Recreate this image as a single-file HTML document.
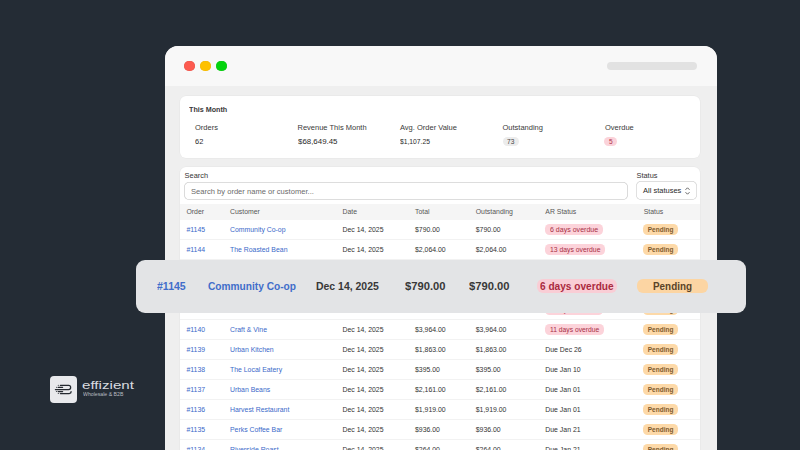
<!DOCTYPE html>
<html><head><meta charset="utf-8"><style>
html,body{margin:0;padding:0;width:800px;height:450px;overflow:hidden;background:#242c35;}
body{position:relative;font-family:"Liberation Sans",sans-serif;}
.t{position:absolute;line-height:1;white-space:nowrap;}
.r{position:absolute;}
</style></head><body>
<div class="r" style="left:164.70px;top:45.50px;width:552.30px;height:424.50px;background:#efefef;border-radius:13px;"></div>
<div class="r" style="left:164.70px;top:45.50px;width:552.30px;height:40.90px;background:#f8f8f8;border-radius:13px 13px 0 0px;"></div>
<div class="r" style="left:184.35px;top:60.55px;width:10.70px;height:10.70px;background:#fd5b50;border-radius:6px;box-shadow:inset 0 0 0 0.5px #e8564c;"></div>
<div class="r" style="left:200.15px;top:60.55px;width:10.70px;height:10.70px;background:#fec100;border-radius:6px;box-shadow:inset 0 0 0 0.5px #f0b80a;"></div>
<div class="r" style="left:215.90px;top:60.55px;width:10.70px;height:10.70px;background:#04d40e;border-radius:6px;box-shadow:inset 0 0 0 0.5px #10c81a;"></div>
<div class="r" style="left:607.30px;top:61.60px;width:89.90px;height:8.80px;background:#e2e2e2;border-radius:5px;"></div>
<div class="r" style="left:180.00px;top:95.50px;width:520.00px;height:62.50px;background:#ffffff;border-radius:6px;box-shadow:0 0 0 0.5px #e6e6e6;"></div>
<div class="t" style="left:188.80px;top:106.00px;font-size:7.4px;color:#3a3a3a;font-weight:700;transform:scaleX(0.9708);transform-origin:0 0;">This Month</div>
<div class="t" style="left:195.00px;top:124.00px;font-size:7.5px;color:#3a3a3a;font-weight:400;">Orders</div>
<div class="t" style="left:195.00px;top:138.00px;font-size:7.3px;color:#2a2a2a;font-weight:400;transform:scaleX(1.0223);transform-origin:0 0;">62</div>
<div class="t" style="left:297.50px;top:124.00px;font-size:7.5px;color:#3a3a3a;font-weight:400;">Revenue This Month</div>
<div class="t" style="left:297.50px;top:138.00px;font-size:7.3px;color:#2a2a2a;font-weight:400;transform:scaleX(1.0812);transform-origin:0 0;">$68,649.45</div>
<div class="t" style="left:400.00px;top:124.00px;font-size:7.5px;color:#3a3a3a;font-weight:400;">Avg. Order Value</div>
<div class="t" style="left:400.00px;top:138.00px;font-size:7.3px;color:#2a2a2a;font-weight:400;transform:scaleX(0.9239);transform-origin:0 0;">$1,107.25</div>
<div class="t" style="left:502.50px;top:124.00px;font-size:7.5px;color:#3a3a3a;font-weight:400;">Outstanding</div>
<div class="r" style="left:502.90px;top:136.90px;width:16.10px;height:9.10px;background:#ececec;border-radius:4.5px;"></div>
<div class="t" style="left:507.00px;top:139.00px;font-size:6.6px;color:#444;font-weight:400;">73</div>
<div class="t" style="left:605.00px;top:124.00px;font-size:7.5px;color:#3a3a3a;font-weight:400;">Overdue</div>
<div class="r" style="left:604.40px;top:136.90px;width:13.10px;height:9.10px;background:#fbd3da;border-radius:4.5px;"></div>
<div class="t" style="left:609.00px;top:139.00px;font-size:6.6px;color:#b0314a;font-weight:400;">5</div>
<div class="r" style="left:180.00px;top:167.00px;width:520.00px;height:313.00px;background:#ffffff;border-radius:6px;box-shadow:0 0 0 0.5px #e6e6e6;"></div>
<div class="t" style="left:184.60px;top:172.00px;font-size:7.4px;color:#333;font-weight:400;">Search</div>
<div class="r" style="left:184.00px;top:182.40px;width:443.60px;height:17.20px;background:#ffffff;border-radius:5px;box-shadow:inset 0 0 0 0.8px #d2d2d2;"></div>
<div class="t" style="left:191.00px;top:188.00px;font-size:7.4px;color:#6a6a6a;font-weight:400;transform:scaleX(1.0242);transform-origin:0 0;">Search by order name or customer...</div>
<div class="t" style="left:636.50px;top:172.00px;font-size:7.4px;color:#333;font-weight:400;">Status</div>
<div class="r" style="left:636.00px;top:181.40px;width:60.70px;height:18.50px;background:#ffffff;border-radius:5px;box-shadow:inset 0 0 0 0.7px #d4d4d4;"></div>
<div class="t" style="left:643.00px;top:187.00px;font-size:7.5px;color:#2a2a2a;font-weight:400;">All statuses</div>
<svg class="r" style="left:684px;top:186px;width:7px;height:10px" viewBox="0 0 7 10"><path d="M1.5 3.8 L3.5 1.8 L5.5 3.8 M1.5 6.2 L3.5 8.2 L5.5 6.2" fill="none" stroke="#555" stroke-width="0.9"/></svg>
<div class="r" style="left:180.00px;top:204.00px;width:520.00px;height:15.60px;background:#f5f5f5;border-radius:0px;"></div>
<div class="t" style="left:186.40px;top:209.00px;font-size:6.9px;color:#555555;font-weight:400;">Order</div>
<div class="t" style="left:230.00px;top:209.00px;font-size:6.9px;color:#555555;font-weight:400;">Customer</div>
<div class="t" style="left:342.50px;top:209.00px;font-size:6.9px;color:#555555;font-weight:400;">Date</div>
<div class="t" style="left:415.00px;top:209.00px;font-size:6.9px;color:#555555;font-weight:400;">Total</div>
<div class="t" style="left:475.75px;top:209.00px;font-size:6.9px;color:#555555;font-weight:400;">Outstanding</div>
<div class="t" style="left:545.30px;top:209.00px;font-size:6.9px;color:#555555;font-weight:400;">AR Status</div>
<div class="t" style="left:643.70px;top:209.00px;font-size:6.9px;color:#555555;font-weight:400;">Status</div>
<div class="t" style="left:186.40px;top:227.00px;font-size:6.9px;color:#3a69c9;font-weight:400;">#1145</div>
<div class="t" style="left:230.00px;top:227.00px;font-size:6.9px;color:#3a69c9;font-weight:400;">Community Co-op</div>
<div class="t" style="left:342.50px;top:227.00px;font-size:6.9px;color:#333333;font-weight:400;">Dec 14, 2025</div>
<div class="t" style="left:415.00px;top:227.00px;font-size:6.9px;color:#333333;font-weight:400;">$790.00</div>
<div class="t" style="left:475.75px;top:227.00px;font-size:6.9px;color:#333333;font-weight:400;">$790.00</div>
<div class="r" style="left:545.30px;top:224.25px;width:57.40px;height:10.65px;background:#fcd3da;border-radius:4.6px;"></div>
<div class="t" style="left:549.80px;top:227.00px;font-size:6.9px;color:#a82f45;font-weight:400;transform:scaleX(1.0217);transform-origin:0 0;">6 days overdue</div>
<div class="r" style="left:643.00px;top:224.00px;width:34.70px;height:10.90px;background:#fdd9a8;border-radius:4.6px;"></div>
<div class="t" style="left:647.75px;top:227.00px;font-size:6.5px;color:#7d5a2e;font-weight:700;">Pending</div>
<div class="r" style="left:180.00px;top:239.40px;width:520.00px;height:0.70px;background:#f2f2f2;border-radius:0px;"></div>
<div class="t" style="left:186.40px;top:247.00px;font-size:6.9px;color:#3a69c9;font-weight:400;">#1144</div>
<div class="t" style="left:230.00px;top:247.00px;font-size:6.9px;color:#3a69c9;font-weight:400;">The Roasted Bean</div>
<div class="t" style="left:342.50px;top:247.00px;font-size:6.9px;color:#333333;font-weight:400;">Dec 14, 2025</div>
<div class="t" style="left:415.00px;top:247.00px;font-size:6.9px;color:#333333;font-weight:400;">$2,064.00</div>
<div class="t" style="left:475.75px;top:247.00px;font-size:6.9px;color:#333333;font-weight:400;">$2,064.00</div>
<div class="r" style="left:545.30px;top:244.25px;width:59.70px;height:10.65px;background:#fcd3da;border-radius:4.6px;"></div>
<div class="t" style="left:549.80px;top:247.00px;font-size:6.9px;color:#a82f45;font-weight:400;transform:scaleX(0.9899);transform-origin:0 0;">13 days overdue</div>
<div class="r" style="left:643.00px;top:244.00px;width:34.70px;height:10.90px;background:#fdd9a8;border-radius:4.6px;"></div>
<div class="t" style="left:647.75px;top:247.00px;font-size:6.5px;color:#7d5a2e;font-weight:700;">Pending</div>
<div class="r" style="left:180.00px;top:259.40px;width:520.00px;height:0.70px;background:#f2f2f2;border-radius:0px;"></div>
<div class="t" style="left:186.40px;top:267.00px;font-size:6.9px;color:#3a69c9;font-weight:400;">#1143</div>
<div class="t" style="left:230.00px;top:267.00px;font-size:6.9px;color:#3a69c9;font-weight:400;">Bean &amp; Leaf</div>
<div class="t" style="left:342.50px;top:267.00px;font-size:6.9px;color:#333333;font-weight:400;">Dec 14, 2025</div>
<div class="t" style="left:415.00px;top:267.00px;font-size:6.9px;color:#333333;font-weight:400;">$1,245.00</div>
<div class="t" style="left:475.75px;top:267.00px;font-size:6.9px;color:#333333;font-weight:400;">$1,245.00</div>
<div class="r" style="left:545.30px;top:264.25px;width:57.40px;height:10.65px;background:#fcd3da;border-radius:4.6px;"></div>
<div class="t" style="left:549.80px;top:267.00px;font-size:6.9px;color:#a82f45;font-weight:400;transform:scaleX(1.0217);transform-origin:0 0;">9 days overdue</div>
<div class="r" style="left:643.00px;top:264.00px;width:34.70px;height:10.90px;background:#fdd9a8;border-radius:4.6px;"></div>
<div class="t" style="left:647.75px;top:267.00px;font-size:6.5px;color:#7d5a2e;font-weight:700;">Pending</div>
<div class="r" style="left:180.00px;top:279.40px;width:520.00px;height:0.70px;background:#f2f2f2;border-radius:0px;"></div>
<div class="t" style="left:186.40px;top:287.00px;font-size:6.9px;color:#3a69c9;font-weight:400;">#1142</div>
<div class="t" style="left:230.00px;top:287.00px;font-size:6.9px;color:#3a69c9;font-weight:400;">Daily Grind</div>
<div class="t" style="left:342.50px;top:287.00px;font-size:6.9px;color:#333333;font-weight:400;">Dec 14, 2025</div>
<div class="t" style="left:415.00px;top:287.00px;font-size:6.9px;color:#333333;font-weight:400;">$842.00</div>
<div class="t" style="left:475.75px;top:287.00px;font-size:6.9px;color:#333333;font-weight:400;">$842.00</div>
<div class="r" style="left:545.30px;top:284.25px;width:57.40px;height:10.65px;background:#fcd3da;border-radius:4.6px;"></div>
<div class="t" style="left:549.80px;top:287.00px;font-size:6.9px;color:#a82f45;font-weight:400;transform:scaleX(1.0217);transform-origin:0 0;">8 days overdue</div>
<div class="r" style="left:643.00px;top:284.00px;width:34.70px;height:10.90px;background:#fdd9a8;border-radius:4.6px;"></div>
<div class="t" style="left:647.75px;top:287.00px;font-size:6.5px;color:#7d5a2e;font-weight:700;">Pending</div>
<div class="r" style="left:180.00px;top:299.40px;width:520.00px;height:0.70px;background:#f2f2f2;border-radius:0px;"></div>
<div class="t" style="left:186.40px;top:307.00px;font-size:6.9px;color:#3a69c9;font-weight:400;">#1141</div>
<div class="t" style="left:230.00px;top:307.00px;font-size:6.9px;color:#3a69c9;font-weight:400;">Green Table</div>
<div class="t" style="left:342.50px;top:307.00px;font-size:6.9px;color:#333333;font-weight:400;">Dec 14, 2025</div>
<div class="t" style="left:415.00px;top:307.00px;font-size:6.9px;color:#333333;font-weight:400;">$1,530.00</div>
<div class="t" style="left:475.75px;top:307.00px;font-size:6.9px;color:#333333;font-weight:400;">$1,530.00</div>
<div class="r" style="left:545.30px;top:304.25px;width:57.40px;height:10.65px;background:#fcd3da;border-radius:4.6px;"></div>
<div class="t" style="left:549.80px;top:307.00px;font-size:6.9px;color:#a82f45;font-weight:400;transform:scaleX(1.0217);transform-origin:0 0;">7 days overdue</div>
<div class="r" style="left:643.00px;top:304.00px;width:34.70px;height:10.90px;background:#fdd9a8;border-radius:4.6px;"></div>
<div class="t" style="left:647.75px;top:307.00px;font-size:6.5px;color:#7d5a2e;font-weight:700;">Pending</div>
<div class="r" style="left:180.00px;top:319.40px;width:520.00px;height:0.70px;background:#f2f2f2;border-radius:0px;"></div>
<div class="t" style="left:186.40px;top:327.00px;font-size:6.9px;color:#3a69c9;font-weight:400;">#1140</div>
<div class="t" style="left:230.00px;top:327.00px;font-size:6.9px;color:#3a69c9;font-weight:400;">Craft &amp; Vine</div>
<div class="t" style="left:342.50px;top:327.00px;font-size:6.9px;color:#333333;font-weight:400;">Dec 14, 2025</div>
<div class="t" style="left:415.00px;top:327.00px;font-size:6.9px;color:#333333;font-weight:400;">$3,964.00</div>
<div class="t" style="left:475.75px;top:327.00px;font-size:6.9px;color:#333333;font-weight:400;">$3,964.00</div>
<div class="r" style="left:545.30px;top:324.25px;width:58.50px;height:10.65px;background:#fcd3da;border-radius:4.6px;"></div>
<div class="t" style="left:549.80px;top:327.00px;font-size:6.9px;color:#a82f45;font-weight:400;transform:scaleX(0.9762);transform-origin:0 0;">11 days overdue</div>
<div class="r" style="left:643.00px;top:324.00px;width:34.70px;height:10.90px;background:#fdd9a8;border-radius:4.6px;"></div>
<div class="t" style="left:647.75px;top:327.00px;font-size:6.5px;color:#7d5a2e;font-weight:700;">Pending</div>
<div class="r" style="left:180.00px;top:339.40px;width:520.00px;height:0.70px;background:#f2f2f2;border-radius:0px;"></div>
<div class="t" style="left:186.40px;top:347.00px;font-size:6.9px;color:#3a69c9;font-weight:400;">#1139</div>
<div class="t" style="left:230.00px;top:347.00px;font-size:6.9px;color:#3a69c9;font-weight:400;">Urban Kitchen</div>
<div class="t" style="left:342.50px;top:347.00px;font-size:6.9px;color:#333333;font-weight:400;">Dec 14, 2025</div>
<div class="t" style="left:415.00px;top:347.00px;font-size:6.9px;color:#333333;font-weight:400;">$1,863.00</div>
<div class="t" style="left:475.75px;top:347.00px;font-size:6.9px;color:#333333;font-weight:400;">$1,863.00</div>
<div class="t" style="left:545.30px;top:347.00px;font-size:6.9px;color:#333333;font-weight:400;">Due Dec 26</div>
<div class="r" style="left:643.00px;top:344.00px;width:34.70px;height:10.90px;background:#fdd9a8;border-radius:4.6px;"></div>
<div class="t" style="left:647.75px;top:347.00px;font-size:6.5px;color:#7d5a2e;font-weight:700;">Pending</div>
<div class="r" style="left:180.00px;top:359.40px;width:520.00px;height:0.70px;background:#f2f2f2;border-radius:0px;"></div>
<div class="t" style="left:186.40px;top:367.00px;font-size:6.9px;color:#3a69c9;font-weight:400;">#1138</div>
<div class="t" style="left:230.00px;top:367.00px;font-size:6.9px;color:#3a69c9;font-weight:400;">The Local Eatery</div>
<div class="t" style="left:342.50px;top:367.00px;font-size:6.9px;color:#333333;font-weight:400;">Dec 14, 2025</div>
<div class="t" style="left:415.00px;top:367.00px;font-size:6.9px;color:#333333;font-weight:400;">$395.00</div>
<div class="t" style="left:475.75px;top:367.00px;font-size:6.9px;color:#333333;font-weight:400;">$395.00</div>
<div class="t" style="left:545.30px;top:367.00px;font-size:6.9px;color:#333333;font-weight:400;">Due Jan 10</div>
<div class="r" style="left:643.00px;top:364.00px;width:34.70px;height:10.90px;background:#fdd9a8;border-radius:4.6px;"></div>
<div class="t" style="left:647.75px;top:367.00px;font-size:6.5px;color:#7d5a2e;font-weight:700;">Pending</div>
<div class="r" style="left:180.00px;top:379.40px;width:520.00px;height:0.70px;background:#f2f2f2;border-radius:0px;"></div>
<div class="t" style="left:186.40px;top:387.00px;font-size:6.9px;color:#3a69c9;font-weight:400;">#1137</div>
<div class="t" style="left:230.00px;top:387.00px;font-size:6.9px;color:#3a69c9;font-weight:400;">Urban Beans</div>
<div class="t" style="left:342.50px;top:387.00px;font-size:6.9px;color:#333333;font-weight:400;">Dec 14, 2025</div>
<div class="t" style="left:415.00px;top:387.00px;font-size:6.9px;color:#333333;font-weight:400;">$2,161.00</div>
<div class="t" style="left:475.75px;top:387.00px;font-size:6.9px;color:#333333;font-weight:400;">$2,161.00</div>
<div class="t" style="left:545.30px;top:387.00px;font-size:6.9px;color:#333333;font-weight:400;">Due Jan 01</div>
<div class="r" style="left:643.00px;top:384.00px;width:34.70px;height:10.90px;background:#fdd9a8;border-radius:4.6px;"></div>
<div class="t" style="left:647.75px;top:387.00px;font-size:6.5px;color:#7d5a2e;font-weight:700;">Pending</div>
<div class="r" style="left:180.00px;top:399.40px;width:520.00px;height:0.70px;background:#f2f2f2;border-radius:0px;"></div>
<div class="t" style="left:186.40px;top:407.00px;font-size:6.9px;color:#3a69c9;font-weight:400;">#1136</div>
<div class="t" style="left:230.00px;top:407.00px;font-size:6.9px;color:#3a69c9;font-weight:400;">Harvest Restaurant</div>
<div class="t" style="left:342.50px;top:407.00px;font-size:6.9px;color:#333333;font-weight:400;">Dec 14, 2025</div>
<div class="t" style="left:415.00px;top:407.00px;font-size:6.9px;color:#333333;font-weight:400;">$1,919.00</div>
<div class="t" style="left:475.75px;top:407.00px;font-size:6.9px;color:#333333;font-weight:400;">$1,919.00</div>
<div class="t" style="left:545.30px;top:407.00px;font-size:6.9px;color:#333333;font-weight:400;">Due Jan 01</div>
<div class="r" style="left:643.00px;top:404.00px;width:34.70px;height:10.90px;background:#fdd9a8;border-radius:4.6px;"></div>
<div class="t" style="left:647.75px;top:407.00px;font-size:6.5px;color:#7d5a2e;font-weight:700;">Pending</div>
<div class="r" style="left:180.00px;top:419.40px;width:520.00px;height:0.70px;background:#f2f2f2;border-radius:0px;"></div>
<div class="t" style="left:186.40px;top:427.00px;font-size:6.9px;color:#3a69c9;font-weight:400;">#1135</div>
<div class="t" style="left:230.00px;top:427.00px;font-size:6.9px;color:#3a69c9;font-weight:400;">Perks Coffee Bar</div>
<div class="t" style="left:342.50px;top:427.00px;font-size:6.9px;color:#333333;font-weight:400;">Dec 14, 2025</div>
<div class="t" style="left:415.00px;top:427.00px;font-size:6.9px;color:#333333;font-weight:400;">$936.00</div>
<div class="t" style="left:475.75px;top:427.00px;font-size:6.9px;color:#333333;font-weight:400;">$936.00</div>
<div class="t" style="left:545.30px;top:427.00px;font-size:6.9px;color:#333333;font-weight:400;">Due Jan 21</div>
<div class="r" style="left:643.00px;top:424.00px;width:34.70px;height:10.90px;background:#fdd9a8;border-radius:4.6px;"></div>
<div class="t" style="left:647.75px;top:427.00px;font-size:6.5px;color:#7d5a2e;font-weight:700;">Pending</div>
<div class="r" style="left:180.00px;top:439.40px;width:520.00px;height:0.70px;background:#f2f2f2;border-radius:0px;"></div>
<div class="t" style="left:186.40px;top:447.00px;font-size:6.9px;color:#3a69c9;font-weight:400;">#1134</div>
<div class="t" style="left:230.00px;top:447.00px;font-size:6.9px;color:#3a69c9;font-weight:400;">Riverside Roast</div>
<div class="t" style="left:342.50px;top:447.00px;font-size:6.9px;color:#333333;font-weight:400;">Dec 14, 2025</div>
<div class="t" style="left:415.00px;top:447.00px;font-size:6.9px;color:#333333;font-weight:400;">$264.00</div>
<div class="t" style="left:475.75px;top:447.00px;font-size:6.9px;color:#333333;font-weight:400;">$264.00</div>
<div class="t" style="left:545.30px;top:447.00px;font-size:6.9px;color:#333333;font-weight:400;">Due Jan 21</div>
<div class="r" style="left:643.00px;top:444.00px;width:34.70px;height:10.90px;background:#fdd9a8;border-radius:4.6px;"></div>
<div class="t" style="left:647.75px;top:447.00px;font-size:6.5px;color:#7d5a2e;font-weight:700;">Pending</div>
<div class="r" style="left:135.50px;top:259.70px;width:610.30px;height:53.70px;background:#e3e4e6;border-radius:9px;"></div>
<div class="t" style="left:156.80px;top:281.00px;font-size:11px;color:#416dca;font-weight:700;transform:scaleX(0.9574);transform-origin:0 0;">#1145</div>
<div class="t" style="left:207.80px;top:281.00px;font-size:11px;color:#416dca;font-weight:700;transform:scaleX(0.9232);transform-origin:0 0;">Community Co-op</div>
<div class="t" style="left:315.50px;top:281.00px;font-size:11px;color:#383838;font-weight:700;transform:scaleX(0.9501);transform-origin:0 0;">Dec 14, 2025</div>
<div class="t" style="left:405.00px;top:281.00px;font-size:11px;color:#383838;font-weight:700;transform:scaleX(1.0187);transform-origin:0 0;">$790.00</div>
<div class="t" style="left:468.75px;top:281.00px;font-size:11px;color:#383838;font-weight:700;transform:scaleX(1.0187);transform-origin:0 0;">$790.00</div>
<div class="r" style="left:537.40px;top:279.00px;width:79.20px;height:14.40px;background:#f9cdd5;border-radius:6px;"></div>
<div class="t" style="left:540.00px;top:281.00px;font-size:11px;color:#aa2a3f;font-weight:700;transform:scaleX(0.9190);transform-origin:0 0;">6 days overdue</div>
<div class="r" style="left:637.00px;top:279.00px;width:70.50px;height:14.40px;background:#fcd5a3;border-radius:6px;"></div>
<div class="t" style="left:652.60px;top:281.00px;font-size:11px;color:#5a4428;font-weight:700;transform:scaleX(0.8989);transform-origin:0 0;">Pending</div>
<div class="r" style="left:50.10px;top:376.30px;width:26.50px;height:26.60px;background:#e8e9ec;border-radius:4px;"></div>
<svg class="r" style="left:0;top:0;width:800px;height:450px" viewBox="0 0 800 450"><g fill="none" stroke="#24292f" stroke-width="1.25" stroke-linecap="round">
<path d="M60.4 385.4 H68.6 A2.05 2.05 0 0 1 68.6 389.5 H55.4"/>
<path d="M60.4 393.5 H69.2 A1.9 1.9 0 0 0 71.1 391.6"/>
<path d="M58.1 387.3 H62.6 M58.1 391.5 H62.6"/>
</g><g fill="#24292f"><circle cx="58.3" cy="385.3" r="0.55"/><circle cx="58.3" cy="393.5" r="0.55"/><circle cx="56.6" cy="387.3" r="0.55"/><circle cx="56.4" cy="391.5" r="0.55"/></g></svg>
<div class="t" style="left:82.10px;top:380.00px;font-size:10.8px;color:#d9dce0;font-weight:400;transform:scaleX(1.4046);transform-origin:0 0;">effizient</div>
<div class="t" style="left:82.60px;top:392.00px;font-size:5.3px;color:#b9bdc3;font-weight:400;transform:scaleX(0.9796);transform-origin:0 0;">Wholesale &amp; B2B</div>
</body></html>
